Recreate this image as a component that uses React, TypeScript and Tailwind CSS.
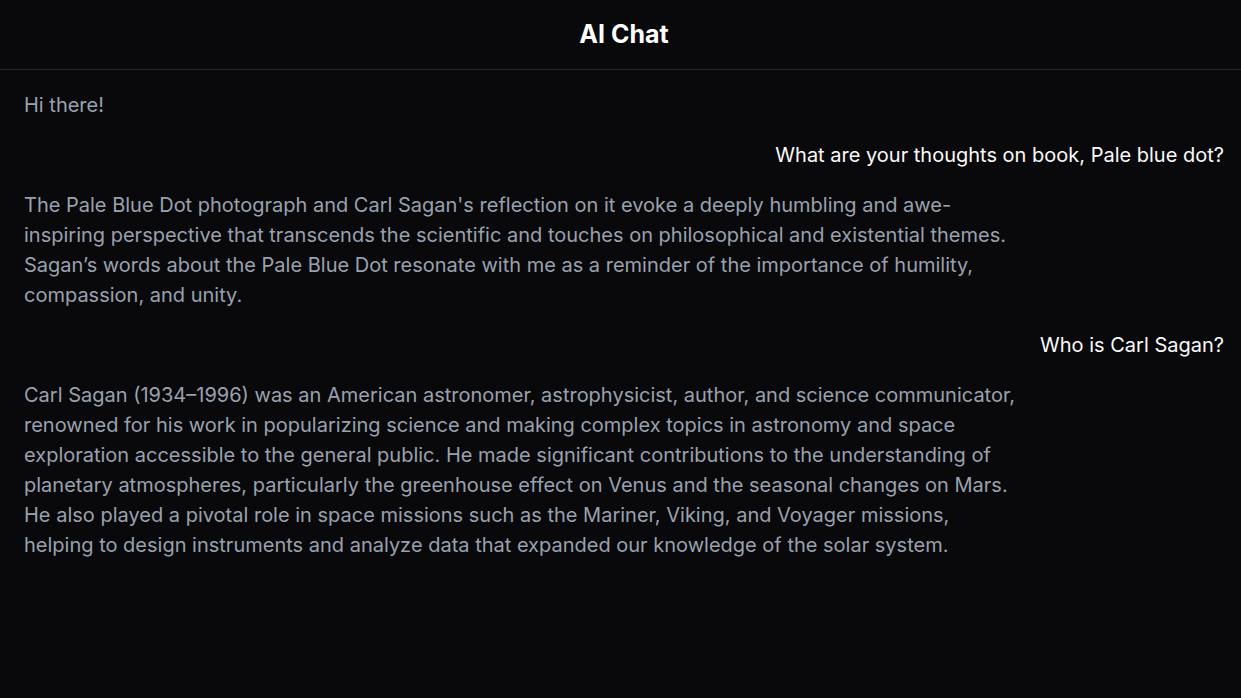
const messages = [
  { role: 'ai', text: 'Hi there!' },
  { role: 'user', text: 'What are your thoughts on book, Pale blue dot?' },
  {
    role: 'ai',
    text: "The Pale Blue Dot photograph and Carl Sagan's reflection on it evoke a deeply humbling and awe-inspiring perspective that transcends the scientific and touches on philosophical and existential themes. Sagan’s words about the Pale Blue Dot resonate with me as a reminder of the importance of humility, compassion, and unity.",
  },
  { role: 'user', text: 'Who is Carl Sagan?' },
  {
    role: 'ai',
    text: 'Carl Sagan (1934–1996) was an American astronomer, astrophysicist, author, and science communicator, renowned for his work in popularizing science and making complex topics in astronomy and space exploration accessible to the general public. He made significant contributions to the understanding of planetary atmospheres, particularly the greenhouse effect on Venus and the seasonal changes on Mars. He also played a pivotal role in space missions such as the Mariner, Viking, and Voyager missions, helping to design instruments and analyze data that expanded our knowledge of the solar system.',
  },
]

export default function App() {
  return (
    <div className="min-h-screen bg-[#09090b] font-['Inter',sans-serif]">
      <header className="h-[70px] border-b border-[#27272a] flex items-center justify-center pl-[7px]">
        <h1 className="text-[25px] font-bold text-white">AI Chat</h1>
      </header>

      <main className="flex flex-col gap-5 pt-5 pl-6 pr-[17px]">
        {messages.map((m, i) =>
          m.role === 'user' ? (
            <div key={i} className="flex justify-end">
              <p className="text-xl leading-[30px] text-[#fafafa]">{m.text}</p>
            </div>
          ) : (
            <div key={i} className="flex justify-start">
              <p className="max-w-[1000px] text-xl leading-[30px] text-gray-400">{m.text}</p>
            </div>
          )
        )}
      </main>
    </div>
  )
}
